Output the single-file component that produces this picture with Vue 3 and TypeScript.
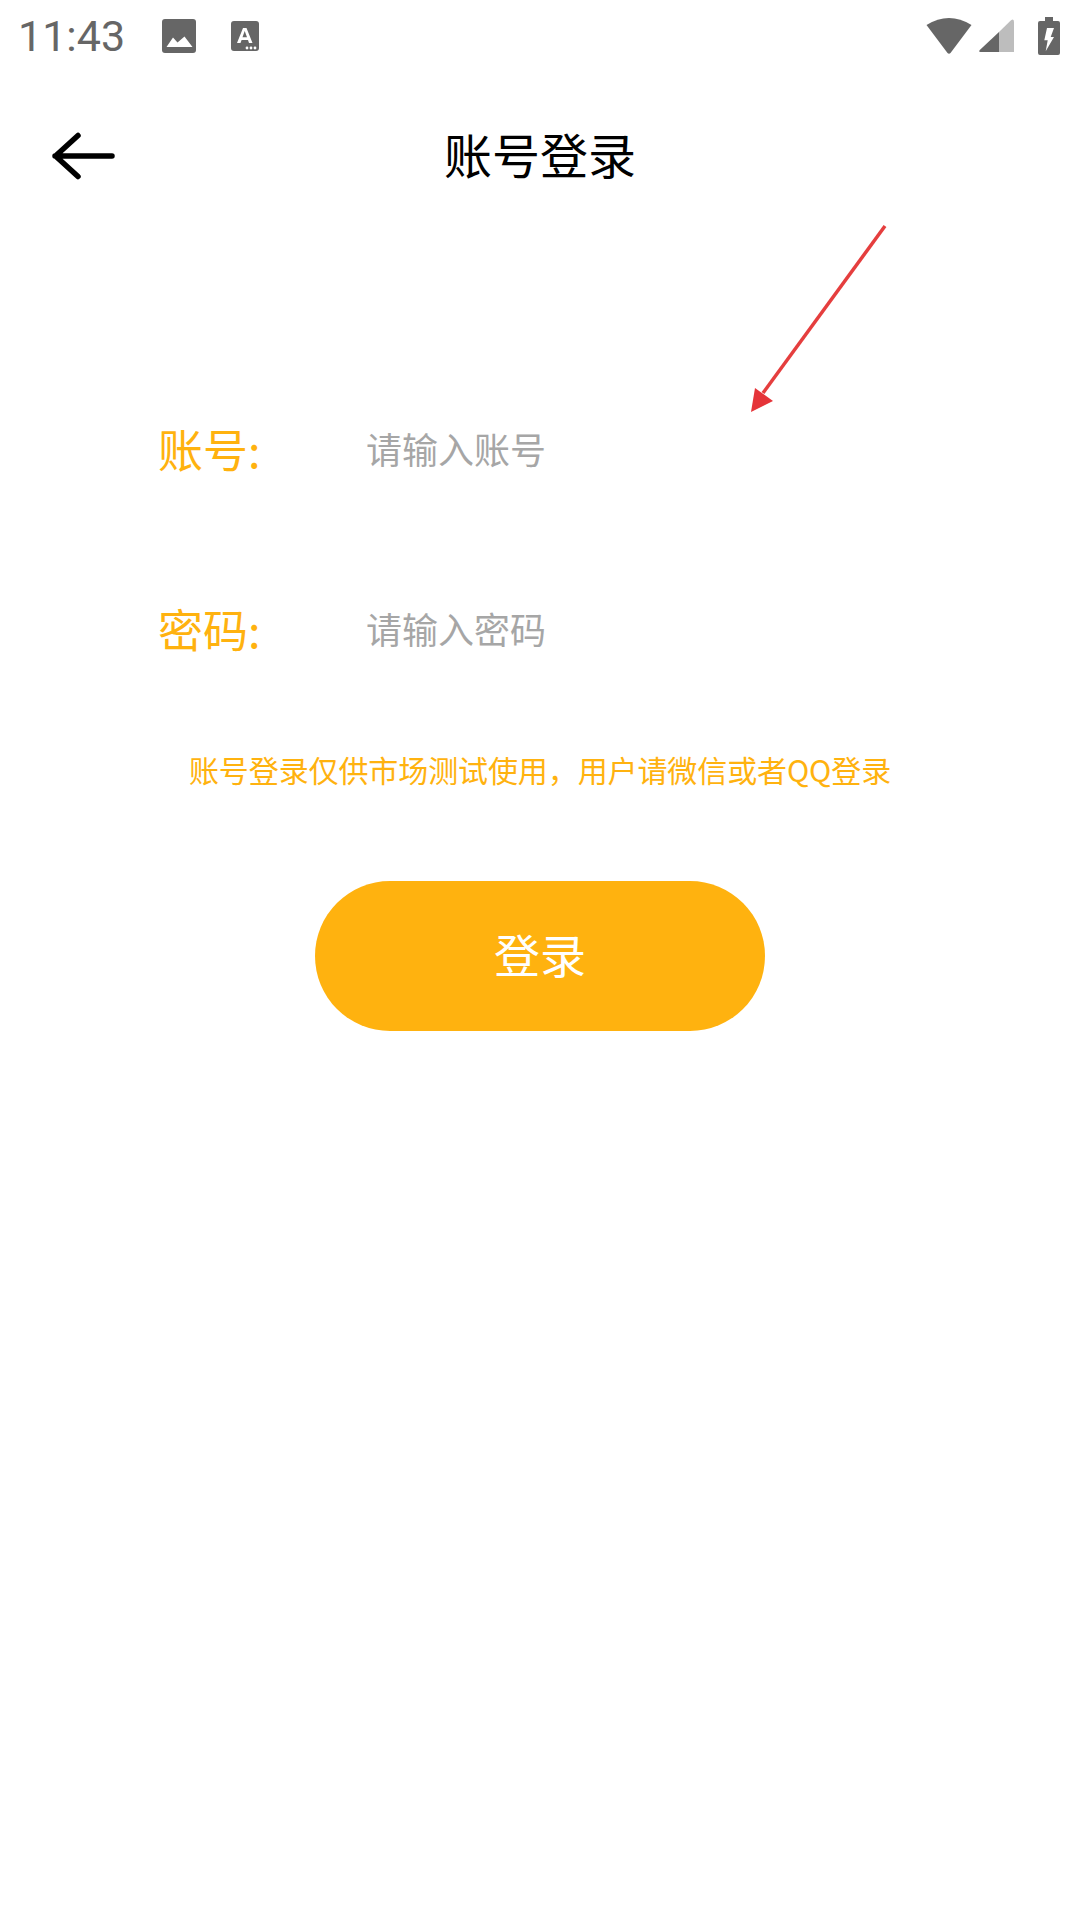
<script setup lang="ts">
// Account login screen: status bar, title bar, two form rows, notice and submit button.
interface Field { label: string; placeholder: string }

const fields: Field[] = [
  { label: "账号:", placeholder: "请输入账号" },
  { label: "密码:", placeholder: "请输入密码" },
];
</script>

<template>
  <div class="page">
    <div class="status">
      <span class="time">11:43</span>
      <svg class="ic-pic" width="34" height="34" viewBox="0 0 34 34">
        <rect width="34" height="34" rx="3" fill="#666" />
        <path d="M4.500 28 L11 18.500 L15.500 23.500 L22.500 17.500 L30.500 28 Z" fill="#fff" />
      </svg>
      <svg class="ic-a" width="28" height="30" viewBox="0 0 28 30">
        <rect width="28" height="30" rx="3" fill="#666" />
        <path d="M6 22 L12 7 H15.500 L21.500 22 H18 L17 19 H10.600 L9.500 22 Z M11.500 16.200 H16 L13.700 10 Z" fill="#fff" fill-rule="evenodd" />
        <circle cx="16" cy="27" r="1.400" fill="#fff" />
        <circle cx="20" cy="27" r="1.400" fill="#fff" />
        <circle cx="24" cy="27" r="1.400" fill="#fff" />
      </svg>
      <span class="spacer"></span>
      <svg class="ic-wifi" width="46" height="38" viewBox="0 0 46 38">
        <path d="M0.500 8 Q23 -6 45.500 8 L24.500 36 Q23 37.500 21.500 36 Z" fill="#666" />
      </svg>
      <svg class="ic-signal" width="35" height="34" viewBox="0 0 35 34">
        <path d="M20 13 L32 1.200 Q35 -1 35 3 V33 H20 Z" fill="#bdbdbd" />
        <path d="M20 13 V33 H1.500 Q-0.800 33 0.800 31 Z" fill="#666" />
      </svg>
      <svg class="ic-bat" width="22" height="38" viewBox="0 0 22 38">
        <path d="M7 0 H15 V4 H20 Q22 4 22 6 V36 Q22 38 20 38 H2 Q0 38 0 36 V6 Q0 4 2 4 H7 Z" fill="#666" />
        <path d="M9 11 H16 L12.700 20 H16 L7.700 34.300 L9.700 23.300 H6.300 Z" fill="#fff" />
      </svg>
    </div>

    <header class="bar">
      <svg class="back" width="66" height="50" viewBox="0 0 66 50">
        <path d="M4 25 H61 M27 4.500 L4.500 25 L27 45.500" fill="none" stroke="#000" stroke-width="5.500" stroke-linecap="round" stroke-linejoin="round" />
      </svg>
      <h1 class="title">账号登录</h1>
    </header>

    <main class="form">
      <div v-for="f in fields" :key="f.label" class="row">
        <span class="label">{{ f.label }}</span>
        <span class="hint">{{ f.placeholder }}</span>
      </div>
      <p class="notice">账号登录仅供市场测试使用，用户请微信或者QQ登录</p>
      <button class="submit" type="button">登录</button>
    </main>

    <!-- red annotation arrow drawn over the screen -->
    <svg class="mark" width="1080" height="500" viewBox="0 0 1080 500">
      <line x1="885" y1="226" x2="763" y2="393" stroke="#e53e3e" stroke-width="3.500" />
      <path d="M751 412 L755 388 L773 401 Z" fill="#e53439" />
    </svg>
  </div>
</template>

<style scoped>
.page {
  position: relative;
  width: 1080px;
  height: 1920px;
  background: #fff;
  overflow: hidden;
  font-family: "Noto Sans CJK SC", "Noto Sans", sans-serif;
}
.status {
  display: flex;
  align-items: center;
  height: 72px;
  padding: 0 20px 0 18px;
  box-sizing: border-box;
}
.time {
  font-family: Roboto, sans-serif;
  font-size: 43px;
  line-height: 72px;
  color: #666;
  width: 144px;
}
.ic-a { margin-left: 35px; }
.spacer { flex: 1; }
.ic-signal { margin-left: 7px; }
.ic-bat { margin-left: 24px; }
.bar {
  display: grid;
  grid-template-columns: 1fr auto 1fr;
  align-items: center;
  height: 168px;
}
.back { margin-left: 51px; grid-column: 1; grid-row: 1; }
.title {
  grid-column: 2;
  grid-row: 1;
  margin: 0 0 6px;
  font-size: 48px;
  font-weight: 400;
  line-height: 162px;
  color: #000;
}
.form {
  display: flex;
  flex-direction: column;
  align-items: center;
  padding-top: 118px;
}
.row {
  display: flex;
  align-items: center;
  align-self: stretch;
  height: 180px;
  padding-left: 158px;
}
.label {
  width: 208px;
  font-size: 45px;
  color: #ffb20f;
}
.hint {
  font-size: 36px;
  color: #a6a6a6;
}
.notice {
  margin: 26px 0 0;
  font-size: 30px;
  letter-spacing: -0.1px;
  line-height: 50px;
  color: #ffb20f;
}
.submit {
  width: 450px;
  height: 150px;
  margin-top: 87px;
  padding: 0 0 7px;
  border: none;
  border-radius: 75px;
  background: #ffb20f;
  color: #fff;
  font-family: inherit;
  font-size: 46px;
}
.mark {
  position: absolute;
  left: 0;
  top: 0;
  pointer-events: none;
}
</style>
